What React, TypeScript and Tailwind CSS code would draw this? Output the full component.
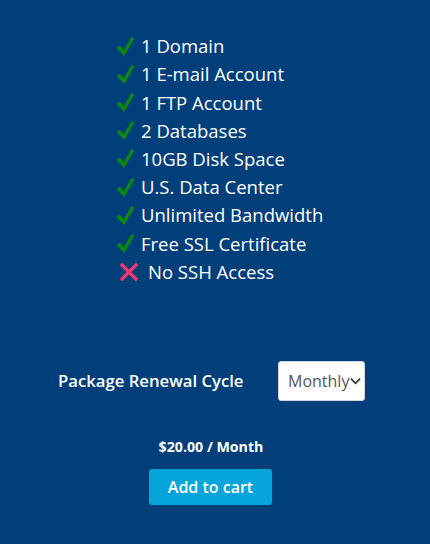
const features = [
  { text: '1 Domain', ok: true },
  { text: '1 E-mail Account', ok: true },
  { text: '1 FTP Account', ok: true },
  { text: '2 Databases', ok: true },
  { text: '10GB Disk Space', ok: true },
  { text: 'U.S. Data Center', ok: true },
  { text: 'Unlimited Bandwidth', ok: true },
  { text: 'Free SSL Certificate', ok: true },
  { text: 'No SSH Access', ok: false },
];

function Check() {
  return (
    <svg viewBox="0 0 20 22" className="w-[19px] h-[21px] shrink-0">
      <path d="M0.5 12.5 L4 10 L8 15 L16.5 1 L19.5 2.5 L8.5 21 Z" fill="#0b8a12" />
    </svg>
  );
}

function Cross() {
  return (
    <svg viewBox="0 0 20 20" className="w-[20px] h-[20px] shrink-0">
      <path d="M3 3 L17 17 M17 3 L3 17" stroke="#f0386a" strokeWidth="3.6" strokeLinecap="round" />
    </svg>
  );
}

export default function App() {
  return (
    <div
      className="w-[430px] h-[544px] bg-[#003f7a] text-white flex flex-col"
      style={{ fontFamily: '"Open Sans", "Noto Sans", sans-serif' }}
    >
      <ul className="pt-[32px] pl-[116px] flex flex-col">
        {features.map((f) => (
          <li key={f.text} className={`flex items-center h-[28.2px] text-[18.5px] ${f.ok ? 'gap-[6px]' : 'gap-[9px] pl-[3px]'}`}>
            {f.ok ? <Check /> : <Cross />}
            <span>{f.text}</span>
          </li>
        ))}
      </ul>

      <div className="mt-[75px] flex items-center pl-[58px]">
        <span className="text-[16.7px] font-semibold w-[220px]">Package Renewal Cycle</span>
        <div className="w-[87px] h-[40px] bg-white rounded-[3px] border border-gray-300 flex items-center pl-[9px] pr-[3px] justify-between">
          <span className="text-[16px] text-[#555]">Monthly</span>
          <svg viewBox="0 0 12 8" className="w-[11px] h-[8px]">
            <path d="M1 1.5 L6 6.5 L11 1.5" stroke="#333" strokeWidth="1.8" fill="none" />
          </svg>
        </div>
      </div>

      <div className="mt-[35px] text-center text-[14.2px] font-bold pr-[8px]">$20.00 / Month</div>

      <div className="mt-[12px] flex justify-center">
        <button className="w-[123px] h-[36px] rounded-[3px] bg-[#05a4d9] text-white text-[16px] font-semibold ml-[-9px]">
          Add to cart
        </button>
      </div>
    </div>
  );
}
